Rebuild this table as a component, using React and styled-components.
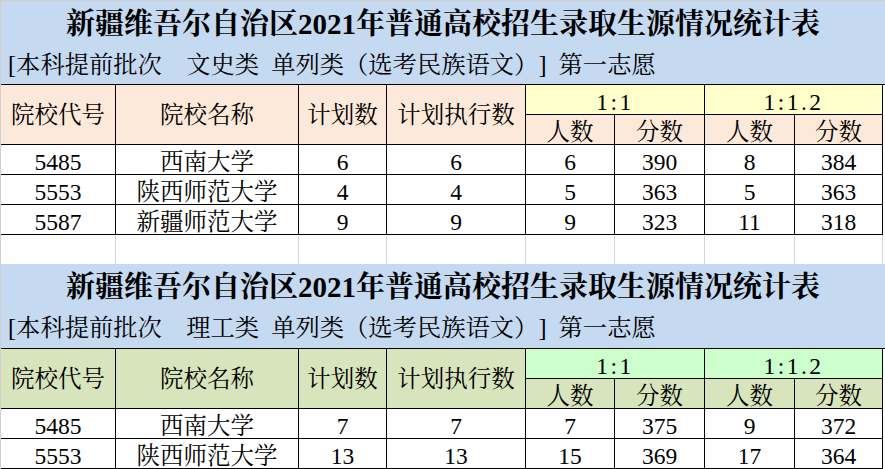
import React from 'react';
import styled, { createGlobalStyle } from 'styled-components';

const Global = createGlobalStyle`
  html, body { margin: 0; padding: 0; background: #fff; }
  body {
    font-family: "Liberation Serif", "Noto Serif CJK SC", "Noto Sans CJK SC", serif;
    color: #000;
    text-spacing-trim: space-all;
  }
`;

const COLS = '115px 183px 88px 139px 89px 90px 90px 88px';

const Sheet = styled.div`
  width: 884px;
  height: 468px;
  overflow: hidden;
  border-top: 1px solid #d0d0d0;
  border-left: 1px solid #d0d0d0;
  background: #fff;
`;

const Banner = styled.div`
  height: ${(p) => p.$h}px;
  background: #c5d9f1;
  display: flex;
  flex-direction: column;
`;

const Title = styled.div`
  font-size: 29px;
  font-weight: 700;
  line-height: 34px;
  padding-top: 6px;
  text-align: center;
  white-space: nowrap;
`;

const Subtitle = styled.div`
  font-size: 24.3px;
  line-height: 26px;
  margin-top: 11px;
  padding-left: 7px;
  white-space: pre;
  word-spacing: 6px;
  text-spacing-trim: space-all;
`;

const Grid = styled.div`
  display: grid;
  grid-template-columns: ${COLS};
  grid-auto-rows: 30px;
  border-top: 1px solid #000;
`;

const Cell = styled.div`
  box-sizing: border-box;
  border-right: 1px solid #000;
  border-bottom: 1px solid #000;
  background: ${(p) => p.$bg || '#fff'};
  grid-row: span ${(p) => p.$rows || 1};
  grid-column: span ${(p) => p.$cols || 1};
  display: flex;
  justify-content: center;
  align-items: ${(p) => (p.$middle ? 'center' : 'flex-end')};
  font-size: 23.5px;
  line-height: 24px;
  white-space: nowrap;
  letter-spacing: ${(p) => (p.$spaced ? '2.5px' : '0')};
`;

const Spacer = styled.div`
  display: grid;
  grid-template-columns: ${COLS};
  height: 29px;
`;

const GridLine = styled.div`
  border-right: 1px solid #d4d4d4;
`;

const themes = {
  arts: { head: '#fde9d9', ratio: '#ffffcc' },
  science: { head: '#d8e4bc', ratio: '#ccffcc' },
};

function Block({ category, theme, rows, bannerHeight }) {
  const t = themes[theme];
  return (
    <>
      <Banner $h={bannerHeight}>
        <Title>新疆维吾尔自治区2021年普通高校招生录取生源情况统计表</Title>
        <Subtitle>{`[本科提前批次　${category} 单列类（选考民族语文）] 第一志愿`}</Subtitle>
      </Banner>
      <Grid>
        <Cell $rows={2} $middle $bg={t.head}>院校代号</Cell>
        <Cell $rows={2} $middle $bg={t.head}>院校名称</Cell>
        <Cell $rows={2} $middle $bg={t.head}>计划数</Cell>
        <Cell $rows={2} $middle $bg={t.head}>计划执行数</Cell>
        <Cell $cols={2} $bg={t.ratio} $spaced>1:1</Cell>
        <Cell $cols={2} $bg={t.ratio} $spaced>1:1.2</Cell>
        <Cell $bg={t.head}>人数</Cell>
        <Cell $bg={t.head}>分数</Cell>
        <Cell $bg={t.head}>人数</Cell>
        <Cell $bg={t.head}>分数</Cell>
        {rows.map((r) =>
          r.map((v, i) => <Cell key={r[0] + '-' + i}>{v}</Cell>)
        )}
      </Grid>
    </>
  );
}

export default function App() {
  return (
    <Sheet>
      <Global />
      <Block
        category="文史类"
        theme="arts"
        bannerHeight={83}
        rows={[
          ['5485', '西南大学', '6', '6', '6', '390', '8', '384'],
          ['5553', '陕西师范大学', '4', '4', '5', '363', '5', '363'],
          ['5587', '新疆师范大学', '9', '9', '9', '323', '11', '318'],
        ]}
      />
      <Spacer>
        {Array.from({ length: 8 }).map((_, i) => (
          <GridLine key={i} />
        ))}
      </Spacer>
      <Block
        category="理工类"
        theme="science"
        bannerHeight={84}
        rows={[
          ['5485', '西南大学', '7', '7', '7', '375', '9', '372'],
          ['5553', '陕西师范大学', '13', '13', '15', '369', '17', '364'],
        ]}
      />
    </Sheet>
  );
}
